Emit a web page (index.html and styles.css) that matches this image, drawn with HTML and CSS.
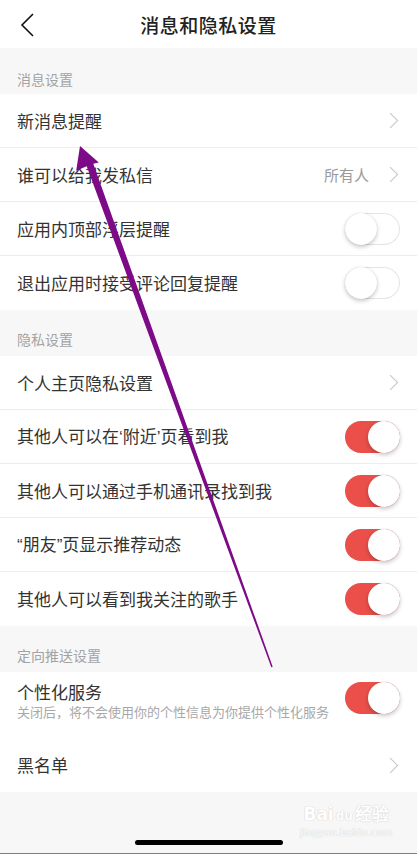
FILE: index.html
```html
<!DOCTYPE html>
<html lang="zh-CN">
  <head>
    <meta charset="UTF-8">
    <meta name="viewport" content="width=device-width, initial-scale=1.0">
    <title>消息和隐私设置</title>
    <link rel="stylesheet" href="styles.css">
  </head>
  <body>
    <div class="page">

      <!-- Top bar -->
      <div class="topbar">
        <svg class="back" width="16" height="26" viewBox="0 0 16 26">
          <polyline points="13,2 2,13 13,24" fill="none" stroke="#111" stroke-width="1.6"/>
        </svg>
        <h1>消息和隐私设置</h1>
      </div>

      <!-- 消息设置 -->
      <div class="section-title first">消息设置</div>
      <div class="row">
        <span class="label">新消息提醒</span>
        <span class="chevron"></span>
      </div>
      <div class="row">
        <span class="label">谁可以给我发私信</span>
        <span class="value">所有人</span>
        <span class="chevron"></span>
      </div>
      <div class="row">
        <span class="label">应用内顶部浮层提醒</span>
        <span class="toggle"><span class="knob"></span></span>
      </div>
      <div class="row last">
        <span class="label">退出应用时接受评论回复提醒</span>
        <span class="toggle"><span class="knob"></span></span>
      </div>

      <!-- 隐私设置 -->
      <div class="section-title">隐私设置</div>
      <div class="row">
        <span class="label">个人主页隐私设置</span>
        <span class="chevron"></span>
      </div>
      <div class="row">
        <span class="label">其他人可以在<span class="q">‘</span>附近<span class="q">’</span>页看到我</span>
        <span class="toggle on"><span class="knob"></span></span>
      </div>
      <div class="row">
        <span class="label">其他人可以通过手机通讯录找到我</span>
        <span class="toggle on"><span class="knob"></span></span>
      </div>
      <div class="row">
        <span class="label"><span class="q">“</span>朋友<span class="q">”</span>页显示推荐动态</span>
        <span class="toggle on"><span class="knob"></span></span>
      </div>
      <div class="row last">
        <span class="label">其他人可以看到我关注的歌手</span>
        <span class="toggle on"><span class="knob"></span></span>
      </div>

      <!-- 定向推送设置 -->
      <div class="section-title">定向推送设置</div>
      <div class="row tall">
        <div class="text">
          <span class="label">个性化服务</span>
          <span class="desc">关闭后，将不会使用你的个性信息为你提供个性化服务</span>
        </div>
        <span class="toggle on"><span class="knob"></span></span>
      </div>
      <div class="row last">
        <span class="label">黑名单</span>
        <span class="chevron"></span>
      </div>

      <div class="footer">
        <div class="home-bar"></div>
      </div>

      <!-- watermark -->
      <div class="watermark">
        <span class="wm-logo">Bai<span class="wm-du">du</span>经验</span>
        <span class="wm-url">jingyan.baidu.com</span>
      </div>

      <!-- annotation arrow -->
      <svg class="arrow" width="417" height="854" viewBox="0 0 417 854">
        <polygon points="80,146 98.8,162.6 93.3,163.8 272.7,666.7 271.3,667.3 86.7,166.2 76.2,170.8" fill="#7d0b88"/>
      </svg>
    </div>
  </body>
</html>
```

FILE: styles.css
```css
body {
  margin: 0;
  padding: 0;
  font-family: "Noto Sans CJK SC", "Noto Sans", sans-serif;
  color: #333;
  background-color: #fff;
}
.page {
  position: relative;
  width: 417px;
  height: 854px;
  overflow: hidden;
  background-color: #f7f7f7;
}
.topbar {
  height: 48px;
  display: flex;
  align-items: center;
  justify-content: center;
  background-color: #fff;
  position: relative;
}
.topbar h1 {
  margin: 0;
  font-size: 19px;
  font-weight: 500;
  color: #222;
  letter-spacing: 0.5px;
}
.back {
  position: absolute;
  left: 20px;
  top: 12px;
}
.section-title {
  height: 46px;
  box-sizing: border-box;
  display: flex;
  align-items: flex-end;
  padding: 0 17px 7px;
  font-size: 14px;
  line-height: 20px;
  color: #a3a3a3;
  background-color: #f7f7f7;
}
.section-title.first {
  padding-bottom: 5px;
}
.row {
  height: 54px;
  box-sizing: border-box;
  display: flex;
  align-items: center;
  padding: 0 17px;
  background-color: #fff;
  border-bottom: 1px solid #ededed;
}
.row.last {
  border-bottom: none;
}
.row.tall {
  height: 66px;
  align-items: flex-start;
  padding-top: 9px;
  border-bottom: none;
}
.label {
  flex: 1;
  font-size: 17px;
  line-height: 22px;
  color: #333;
}
.q {
  font-family: "Liberation Sans", sans-serif;
}
.text {
  flex: 1;
  display: flex;
  flex-direction: column;
}
.text .label {
  flex: none;
  line-height: 22px;
}
.desc {
  font-size: 13px;
  line-height: 17px;
  color: #a8a8a8;
}
.value {
  font-size: 15px;
  color: #9a9a9a;
  margin-right: 16px;
}
.chevron {
  width: 10px;
  height: 10px;
  border-top: 1.2px solid #c4c4c4;
  border-right: 1.2px solid #c4c4c4;
  transform: rotate(45deg);
  margin-right: 4px;
}
.toggle {
  width: 55px;
  height: 32px;
  border-radius: 16px;
  display: flex;
  align-items: center;
  justify-content: flex-start;
  box-shadow: inset 0 0 0 1px #e4e4e4;
  background-color: #fff;
}
.row.tall .toggle {
  margin-top: 1px;
}
.toggle.on {
  justify-content: flex-end;
  background-color: #ea4f49;
  box-shadow: none;
}
.knob {
  width: 32px;
  height: 32px;
  border-radius: 50%;
  background-color: #fff;
  box-shadow: 0 2px 4px rgba(0, 0, 0, 0.22), 0 0 1px rgba(0, 0, 0, 0.15);
}
.footer {
  height: 63px;
  display: flex;
  justify-content: center;
  align-items: flex-end;
  padding-bottom: 8px;
  box-sizing: border-box;
  border-bottom: 2px solid #6f7f9c;
}
.home-bar {
  width: 148px;
  height: 5px;
  border-radius: 3px;
  background-color: #000;
}
.watermark {
  position: absolute;
  left: 300px;
  top: 803px;
  display: flex;
  flex-direction: column;
  align-items: center;
  color: #fff;
  font-family: "DejaVu Sans", sans-serif;
  text-shadow: 0 0 1px #cfcfcf, 0 0 1px #cfcfcf;
}
.wm-logo {
  font-size: 17px;
  font-weight: bold;
  line-height: 22px;
}
.wm-du {
  font-size: 12px;
  margin: 0 2px;
}
.wm-url {
  font-size: 10px;
  line-height: 12px;
}
.arrow {
  position: absolute;
  top: 0;
  left: 0;
  pointer-events: none;
}
```
